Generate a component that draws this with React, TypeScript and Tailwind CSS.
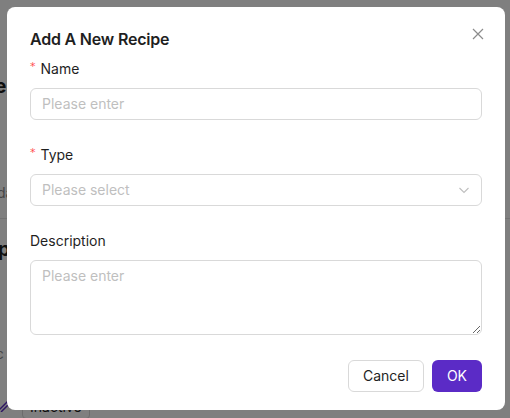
import React from 'react';

const FONT = { fontFamily: 'Inter, "Noto Sans", sans-serif' };

const Label = ({ text, required }: { text: string; required?: boolean }) => (
  <div className="h-[22px] mb-2 flex items-center text-sm text-[#1f1f1f]">
    {required && (
      <span className="text-[#ff4d4f] mr-[5px] text-[11px] leading-none -mt-[5px]" style={{ fontFamily: '"DejaVu Sans", sans-serif' }}>
        *
      </span>
    )}
    {text}
  </div>
);

const App: React.FC = () => {
  return (
    <div className="relative w-[510px] h-[418px] overflow-hidden bg-white" style={FONT}>
      {/* page behind the dialog */}
      <div className="flex flex-col text-[#1f1f1f]">
        <div className="h-[74px]" />
        <div className="-ml-[60px] text-xl font-bold h-[24px] leading-[24px]">Recipe List</div>
        <div className="h-[85px]" />
        <div className="-ml-[22px] text-sm text-[#8c8c8c] h-[20px]">Updated</div>
        <div className="h-[15px]" />
        <div className="border-t border-[#e5e5e5]" />
        <div className="h-[16px]" />
        <div className="-ml-[40px] text-xl font-bold h-[24px]">Soup</div>
        <div className="h-[25px]" />
        <div className="-ml-[14px] text-sm text-[#8c8c8c] h-[20px]">…</div>
        <div className="h-[40px]" />
        <div className="-ml-[30px] text-sm text-[#8c8c8c] h-[20px]">Spec</div>
        <div className="h-[31px]" />
        <div className="flex items-start pl-[3px]">
          <svg width="14" height="14" viewBox="0 0 14 14" className="-ml-[6px] mt-[3px]">
            <path d="M2 12 L10 4 L12 6 L4 14" fill="none" stroke="#5b2bc6" strokeWidth="1.5" />
          </svg>
          <span className="ml-[11px] border border-[#d9d9d9] rounded px-[7px] text-sm leading-[22px] text-[#1f1f1f]">
            Inactive
          </span>
        </div>
      </div>

      {/* mask */}
      <div className="absolute inset-0 bg-black/50" />

      {/* dialog */}
      <div className="absolute left-[7px] top-[7px] w-[498px] bg-white rounded-lg pl-[23px] pr-[23px] pt-5 pb-[18px]">
        <div className="h-6 leading-6 text-base font-semibold text-[#1f1f1f] mb-[7px] tracking-[-0.2px]">Add A New Recipe</div>
        <button className="absolute right-[21px] top-[21px] w-3 h-3 flex items-center justify-center">
          <svg width="12" height="12" viewBox="0 0 12 12">
            <path d="M1 1 L11 11 M11 1 L1 11" stroke="#8c8c8c" strokeWidth="1.2" fill="none" />
          </svg>
        </button>

        <Label text="Name" required />
        <div className="h-8 border border-[#d9d9d9] rounded-md flex items-center px-[11px] text-sm text-[#bfbfbf] mb-6">
          Please enter
        </div>

        <Label text="Type" required />
        <div className="h-8 border border-[#d9d9d9] rounded-md flex items-center justify-between pl-[11px] pr-[11px] text-sm text-[#bfbfbf] mb-6">
          <span>Please select</span>
          <svg width="12" height="12" viewBox="0 0 12 12">
            <path d="M1.5 4 L6 8.5 L10.5 4" stroke="#bfbfbf" strokeWidth="1.1" fill="none" />
          </svg>
        </div>

        <Label text="Description" />
        <textarea
          placeholder="Please enter"
          className="block w-full h-[75px] border border-[#d9d9d9] rounded-md px-[11px] py-1 text-sm leading-[22px] placeholder:text-[#bfbfbf] outline-none"
          style={FONT}
        />

        <div className="flex justify-end gap-2 mt-[25px]">
          <button className="h-8 px-[14px] border border-[#d9d9d9] rounded-md text-sm text-[#1f1f1f] bg-white">
            Cancel
          </button>
          <button className="h-8 px-[15px] rounded-md text-sm text-white bg-[#5b2bc6]">OK</button>
        </div>
      </div>
    </div>
  );
};

export default App;
